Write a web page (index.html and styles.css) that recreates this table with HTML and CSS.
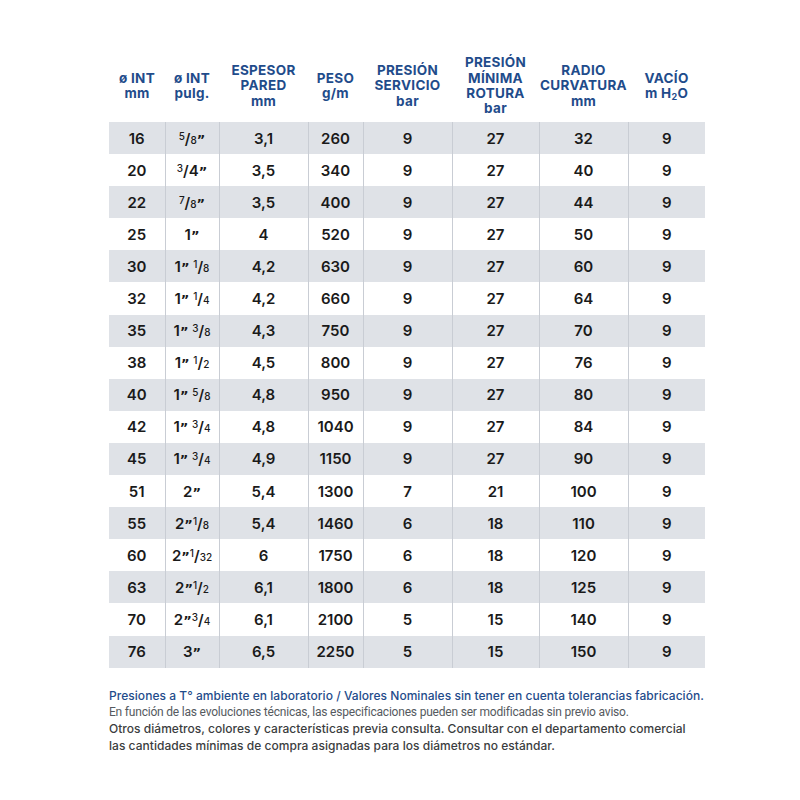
FILE: index.html
```html
<!DOCTYPE html>
<html lang="es">
<head>
<meta charset="utf-8">
<title>Tabla</title>
<link rel="stylesheet" href="styles.css">
</head>
<body>
<div class="page">
  <table class="spec">
    <colgroup>
      <col class="c1"><col class="c2"><col class="c3"><col class="c4"><col class="c5"><col class="c6"><col class="c7"><col class="c8">
    </colgroup>
    <thead>
      <tr>
        <th>ø INT<br>mm</th>
        <th>ø INT<br>pulg.</th>
        <th>ESPESOR<br>PARED<br>mm</th>
        <th>PESO<br>g/m</th>
        <th>PRESIÓN<br>SERVICIO<br>bar</th>
        <th>PRESIÓN<br>MÍNIMA<br>ROTURA<br>bar</th>
        <th>RADIO<br>CURVATURA<br>mm</th>
        <th>VACÍO<br>m H<sub class="h2">2</sub>O</th>
      </tr>
    </thead>
    <tbody>
      <tr><td>16</td><td><span class="fn">5</span>/<span class="fd">8</span><span class="q">”</span></td><td>3,1</td><td>260</td><td>9</td><td>27</td><td>32</td><td>9</td></tr>
      <tr><td>20</td><td><span class="fn">3</span>/4<span class="q">”</span></td><td>3,5</td><td>340</td><td>9</td><td>27</td><td>40</td><td>9</td></tr>
      <tr><td>22</td><td><span class="fn">7</span>/<span class="fd">8</span><span class="q">”</span></td><td>3,5</td><td>400</td><td>9</td><td>27</td><td>44</td><td>9</td></tr>
      <tr><td>25</td><td>1<span class="q">”</span></td><td>4</td><td>520</td><td>9</td><td>27</td><td>50</td><td>9</td></tr>
      <tr><td>30</td><td>1<span class="q">”</span> <span class="fn">1</span>/<span class="fd">8</span></td><td>4,2</td><td>630</td><td>9</td><td>27</td><td>60</td><td>9</td></tr>
      <tr><td>32</td><td>1<span class="q">”</span> <span class="fn">1</span>/<span class="fd">4</span></td><td>4,2</td><td>660</td><td>9</td><td>27</td><td>64</td><td>9</td></tr>
      <tr><td>35</td><td>1<span class="q">”</span> <span class="fn">3</span>/<span class="fd">8</span></td><td>4,3</td><td>750</td><td>9</td><td>27</td><td>70</td><td>9</td></tr>
      <tr><td>38</td><td>1<span class="q">”</span> <span class="fn">1</span>/<span class="fd">2</span></td><td>4,5</td><td>800</td><td>9</td><td>27</td><td>76</td><td>9</td></tr>
      <tr><td>40</td><td>1<span class="q">”</span> <span class="fn">5</span>/<span class="fd">8</span></td><td>4,8</td><td>950</td><td>9</td><td>27</td><td>80</td><td>9</td></tr>
      <tr><td>42</td><td>1<span class="q">”</span> <span class="fn">3</span>/<span class="fd">4</span></td><td>4,8</td><td>1040</td><td>9</td><td>27</td><td>84</td><td>9</td></tr>
      <tr><td>45</td><td>1<span class="q">”</span> <span class="fn">3</span>/<span class="fd">4</span></td><td>4,9</td><td>1150</td><td>9</td><td>27</td><td>90</td><td>9</td></tr>
      <tr><td>51</td><td>2<span class="q">”</span></td><td>5,4</td><td>1300</td><td>7</td><td>21</td><td>100</td><td>9</td></tr>
      <tr><td>55</td><td>2<span class="q">”</span><span class="fn">1</span>/<span class="fd">8</span></td><td>5,4</td><td>1460</td><td>6</td><td>18</td><td>110</td><td>9</td></tr>
      <tr><td>60</td><td>2<span class="q">”</span><span class="fn">1</span>/<span class="fd">32</span></td><td>6</td><td>1750</td><td>6</td><td>18</td><td>120</td><td>9</td></tr>
      <tr><td>63</td><td>2<span class="q">”</span><span class="fn">1</span>/<span class="fd">2</span></td><td>6,1</td><td>1800</td><td>6</td><td>18</td><td>125</td><td>9</td></tr>
      <tr><td>70</td><td>2<span class="q">”</span><span class="fn">3</span>/<span class="fd">4</span></td><td>6,1</td><td>2100</td><td>5</td><td>15</td><td>140</td><td>9</td></tr>
      <tr><td>76</td><td>3<span class="q">”</span></td><td>6,5</td><td>2250</td><td>5</td><td>15</td><td>150</td><td>9</td></tr>
    </tbody>
  </table>
  <div class="notes">
    <p class="n1">Presiones a T° ambiente en laboratorio / Valores Nominales sin tener en cuenta tolerancias fabricación.</p>
    <p class="n2">En función de las evoluciones técnicas, las especificaciones pueden ser modificadas sin previo aviso.</p>
    <p class="n3">Otros diámetros, colores y características previa consulta. Consultar con el departamento comercial<br>las cantidades mínimas de compra asignadas para los diámetros no estándar.</p>
  </div>
</div>
</body>
</html>
```
FILE: styles.css
```css
html, body {
  margin: 0;
  padding: 0;
  background: #ffffff;
}

.page {
  width: 800px;
  height: 800px;
  padding: 50px 0 0 109px;
  box-sizing: border-box;
  font-family: Inter, "Noto Sans", sans-serif;
}

.spec {
  border-collapse: collapse;
  table-layout: fixed;
  width: 596px;
}

.c1 { width: 56px; }
.c2 { width: 54px; }
.c3 { width: 89px; }
.c4 { width: 55px; }
.c5 { width: 89px; }
.c6 { width: 87px; }
.c7 { width: 89px; }
.c8 { width: 77px; }

.spec th {
  height: 72px;
  padding: 0;
  vertical-align: middle;
  text-align: center;
  color: #1f4c8b;
  font-size: 13.5px;
  font-weight: 700;
  line-height: 15.3px;
  letter-spacing: 0.3px;
}

.h2 {
  font-size: 9px;
  line-height: 0;
  vertical-align: -2px;
}

.spec td {
  height: 32.1px;
  padding: 0;
  text-align: center;
  vertical-align: middle;
  font-size: 15px;
  font-weight: 600;
  color: #1a1a1a;
  border-left: 1px solid #c9cdd4;
}

.spec td:first-child {
  border-left: none;
}

.spec tbody tr:nth-child(odd) td {
  background: #dfe2e7;
}

.fn, .fd {
  font-size: 10px;
  font-weight: 500;
}

.fn {
  vertical-align: 4px;
}

.q {
  font-family: "DejaVu Sans", sans-serif;
  font-size: 13px;
  font-weight: 700;
}

.notes {
  margin-top: 20px;
  width: 620px;
}

.notes p {
  margin: 0;
  font-size: 12px;
  line-height: 16.7px;
  white-space: nowrap;
}

.n1 {
  color: #1f4c8b;
  font-weight: 500;
  letter-spacing: 0.04px;
}

.n2 {
  color: #555a60;
  font-family: Roboto, "Noto Sans", sans-serif;
  font-weight: 400;
  letter-spacing: -0.2px;
}

.n3 {
  color: #3b3d40;
  font-weight: 500;
  letter-spacing: 0.03px;
}
```
